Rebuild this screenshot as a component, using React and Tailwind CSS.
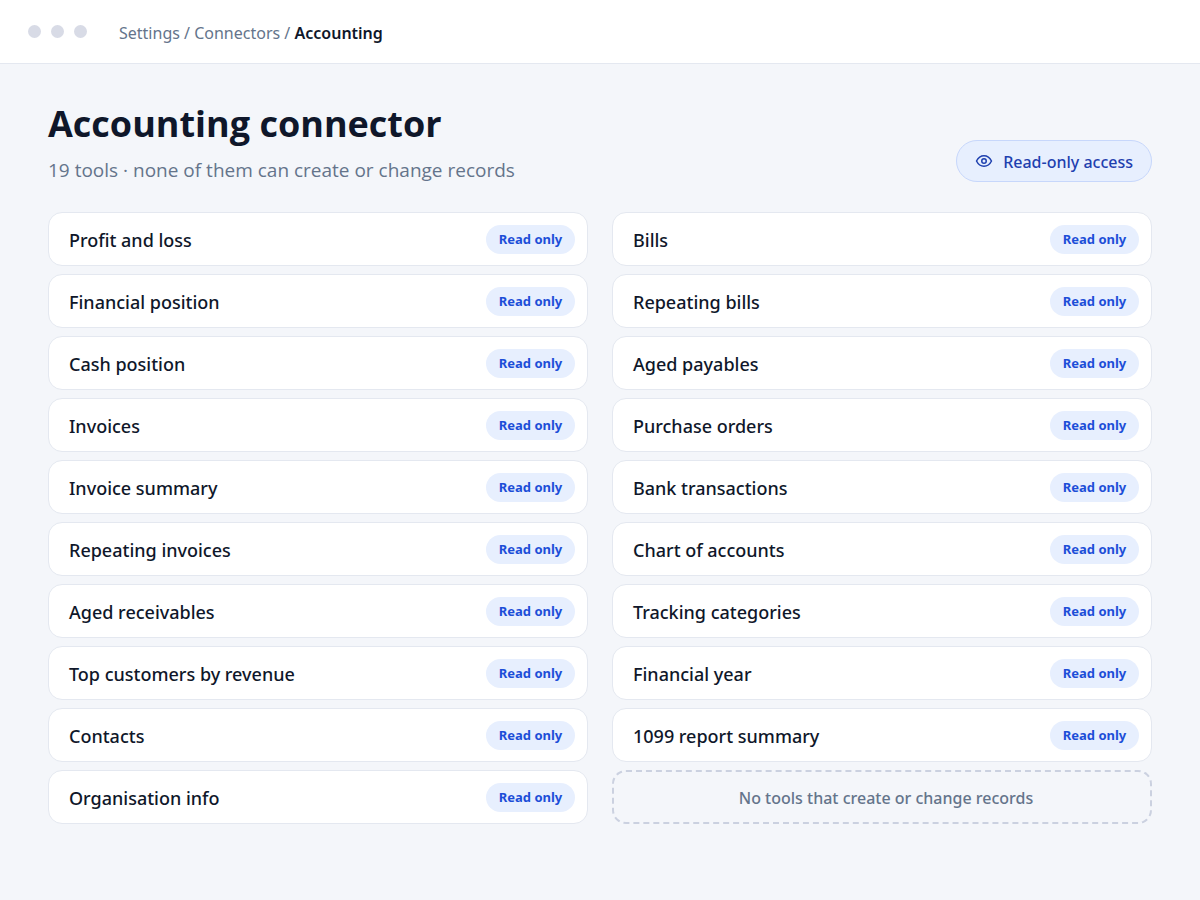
/**
 * App.jsx
 * Settings page listing the tools of the accounting connector.
 */

const REPORTS = [
  'Profit and loss',
  'Financial position',
  'Cash position',
  'Invoices',
  'Invoice summary',
  'Repeating invoices',
  'Aged receivables',
  'Top customers by revenue',
  'Contacts',
  'Organisation info',
]

const LEDGERS = [
  'Bills',
  'Repeating bills',
  'Aged payables',
  'Purchase orders',
  'Bank transactions',
  'Chart of accounts',
  'Tracking categories',
  'Financial year',
  '1099 report summary',
]

const EyeIcon = () => (
  <svg className="size-[18px]" viewBox="0 0 24 24" fill="none" stroke="currentColor"
    strokeWidth="2" strokeLinejoin="round" aria-hidden="true">
    <path d="M2 12s3.5-7 10-7 10 7 10 7-3.5 7-10 7-10-7-10-7Z" />
    <circle cx="12" cy="12" r="3" />
  </svg>
)

const ToolRow = ({ name }) => (
  <li className="flex h-[54px] items-center justify-between rounded-[14px] border border-[#e4e8f0] bg-white pl-5 pr-3">
    <span className="pt-0.5 text-lg font-medium text-[#0f172a]">{name}</span>
    <span className="flex h-[29px] min-w-[89px] items-center justify-center rounded-full bg-[#e7effe] px-3 pt-0.5 text-[13px] font-bold text-[#1d4ed8]">
      Read only
    </span>
  </li>
)

export default function App() {
  return (
    <div className="min-h-screen bg-[#f4f6fa] font-['Segoe_UI','Noto_Sans','Open_Sans',sans-serif] text-[#0f172a]">
      {/* Top bar */}
      <header className="flex h-16 items-center gap-8 border-b border-[#e4e8f0] bg-white px-7">
        <div className="flex gap-2.5" aria-hidden="true">
          <span className="size-[13px] rounded-full bg-[#d8dbe6]" />
          <span className="size-[13px] rounded-full bg-[#d8dbe6]" />
          <span className="size-[13px] rounded-full bg-[#d8dbe6]" />
        </div>
        <nav aria-label="Breadcrumb" className="pt-0.5 text-base text-[#64748b]">
          <a href="#settings">Settings</a> / <a href="#connectors">Connectors</a> /{' '}
          <span className="font-semibold text-[#0f172a]" aria-current="page">Accounting</span>
        </nav>
      </header>

      <main className="px-12 pt-8 pb-12">
        {/* Title */}
        <div className="flex items-end justify-between gap-6 font-['Segoe_UI','Open_Sans',sans-serif]">
          <div>
            <h1 className="text-[36px] leading-14 font-bold">Accounting connector</h1>
            <p className="text-[19px] leading-9 text-[#64748b]">
              19 tools · none of them can create or change records
            </p>
          </div>
          <div className="mb-1.5 flex h-[42px] shrink-0 items-center gap-2.5 rounded-full border border-[#c7d7fb] bg-[#e7effe] px-[18px] font-['Segoe_UI','Noto_Sans',sans-serif] font-medium text-[#1e40af]">
            <EyeIcon />
            <span className="pt-0.5">Read-only access</span>
          </div>
        </div>

        {/* Tools */}
        <div className="mt-6 grid gap-x-6 gap-y-2 md:grid-cols-2">
          <ul className="flex flex-col gap-2">
            {REPORTS.map(name => <ToolRow key={name} name={name} />)}
          </ul>
          <div className="flex flex-col gap-2">
            <ul className="flex flex-col gap-2">
              {LEDGERS.map(name => <ToolRow key={name} name={name} />)}
            </ul>
            <p className="flex h-[54px] items-center justify-center rounded-[14px] border-2 border-dashed border-[#cbd1e0] pt-0.5 pl-5 pr-3 font-medium text-[#64748b]">
              No tools that create or change records
            </p>
          </div>
        </div>
      </main>
    </div>
  )
}
